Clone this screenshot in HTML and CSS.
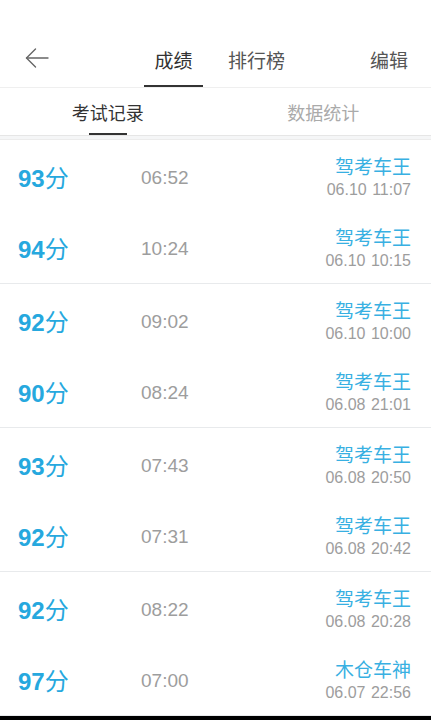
FILE: index.html
```html
<!DOCTYPE html>
<html lang="zh-CN">
<head>
<meta charset="utf-8">
<title>成绩</title>
<link rel="stylesheet" href="styles.css">
</head>
<body>
<div class="page">
  <header class="header">
    <div class="back">
      <svg width="24" height="20" viewBox="0 0 24 20" fill="none" stroke="#666" stroke-width="1.4" stroke-linecap="round" stroke-linejoin="round">
        <path d="M1.5 10H23"/>
        <path d="M10.5 1L1.5 10L10.5 19"/>
      </svg>
    </div>
    <nav class="tabs">
      <div class="tab active">成绩</div>
      <div class="tab">排行榜</div>
    </nav>
    <div class="edit">编辑</div>
  </header>

  <div class="subtabs">
    <div class="subtab active"><span class="label">考试记录</span><span class="bar"></span></div>
    <div class="subtab"><span class="label">数据统计</span><span class="bar"></span></div>
  </div>

  <div class="gap"></div>

  <div class="list">
    <div class="group">
      <div class="row"><div class="score"><b>93</b>分</div><div class="time">06:52</div><div class="meta"><div class="name">驾考车王</div><div class="date">06.10 11:07</div></div></div>
      <div class="row"><div class="score"><b>94</b>分</div><div class="time">10:24</div><div class="meta"><div class="name">驾考车王</div><div class="date">06.10 10:15</div></div></div>
    </div>
    <div class="group">
      <div class="row"><div class="score"><b>92</b>分</div><div class="time">09:02</div><div class="meta"><div class="name">驾考车王</div><div class="date">06.10 10:00</div></div></div>
      <div class="row"><div class="score"><b>90</b>分</div><div class="time">08:24</div><div class="meta"><div class="name">驾考车王</div><div class="date">06.08 21:01</div></div></div>
    </div>
    <div class="group">
      <div class="row"><div class="score"><b>93</b>分</div><div class="time">07:43</div><div class="meta"><div class="name">驾考车王</div><div class="date">06.08 20:50</div></div></div>
      <div class="row"><div class="score"><b>92</b>分</div><div class="time">07:31</div><div class="meta"><div class="name">驾考车王</div><div class="date">06.08 20:42</div></div></div>
    </div>
    <div class="group">
      <div class="row"><div class="score"><b>92</b>分</div><div class="time">08:22</div><div class="meta"><div class="name">驾考车王</div><div class="date">06.08 20:28</div></div></div>
      <div class="row"><div class="score"><b>97</b>分</div><div class="time">07:00</div><div class="meta"><div class="name">木仓车神</div><div class="date">06.07 22:56</div></div></div>
    </div>
  </div>
  <div class="navbar"></div>
</div>
</body>
</html>
```

FILE: styles.css
```css
* { box-sizing: border-box; }
html, body { margin: 0; padding: 0; background: #fff; }
body {
  font-family: "Liberation Sans", "Noto Sans CJK SC", sans-serif;
  overflow: hidden;
}
.page { width: 431px; height: 720px; overflow: hidden; }

.header {
  height: 88px;
  padding-top: 40px;
  display: flex;
  align-items: flex-start;
  border-bottom: 1px solid #efefef;
}
.back { padding-left: 25px; margin-top: 8px; width: 49px; height: 20px; }
.back svg { display: block; }
.tabs { display: flex; margin-left: 95px; gap: 24px; }
.tab {
  width: 59px;
  text-align: center;
  font-family: "Noto Sans CJK SC", sans-serif;
  font-size: 19px;
  line-height: 40px;
  padding-bottom: 5px;
  color: #555;
  border-bottom: 2px solid transparent;
}
.tab.active { color: #333; border-bottom-color: #333; }
.edit {
  margin-left: auto;
  padding-right: 23px;
  font-family: "Noto Sans CJK SC", sans-serif;
  font-size: 19px;
  line-height: 40px;
  color: #555;
}

.subtabs {
  display: flex;
  height: 48px;
  border-bottom: 1px solid #e6e6e6;
}
.subtab {
  flex: 1;
  display: flex;
  flex-direction: column;
  align-items: center;
  padding-top: 12px;
}
.subtab .label {
  font-family: "Noto Sans CJK SC", sans-serif;
  font-size: 18px;
  line-height: 24px;
  color: #aaa;
}
.subtab .bar { width: 38px; height: 2px; margin-top: 9px; }
.subtab.active .label { color: #333; }
.subtab.active .bar { background: #333; }

.gap { height: 4px; background: #f5f6f7; border-bottom: 1px solid #ececec; }

.group {
  height: 144px;
  border-bottom: 1px solid #e8eaec;
  display: flex;
  flex-direction: column;
}
.row {
  flex: 1;
  display: flex;
  align-items: center;
  padding: 4px 20px 0 18px;
}
.score {
  width: 123px;
  color: #26a8de;
  font-size: 24px;
  line-height: 30px;
  font-family: "Noto Sans CJK SC", sans-serif;
}
.score b {
  font-family: "Liberation Sans", sans-serif;
  font-weight: 700;
}
.time {
  flex: 1;
  color: #9d9d9d;
  font-size: 19px;
  line-height: 24px;
}
.meta { text-align: right; }
.name {
  font-family: "Noto Sans CJK SC", sans-serif;
  font-size: 19px;
  line-height: 22px;
  color: #38b0e2;
}
.date {
  margin-top: 2px;
  font-size: 16px;
  line-height: 22px;
  color: #9d9d9d;
  word-spacing: 1px;
}
.navbar { height: 4px; background: #000; }
```
